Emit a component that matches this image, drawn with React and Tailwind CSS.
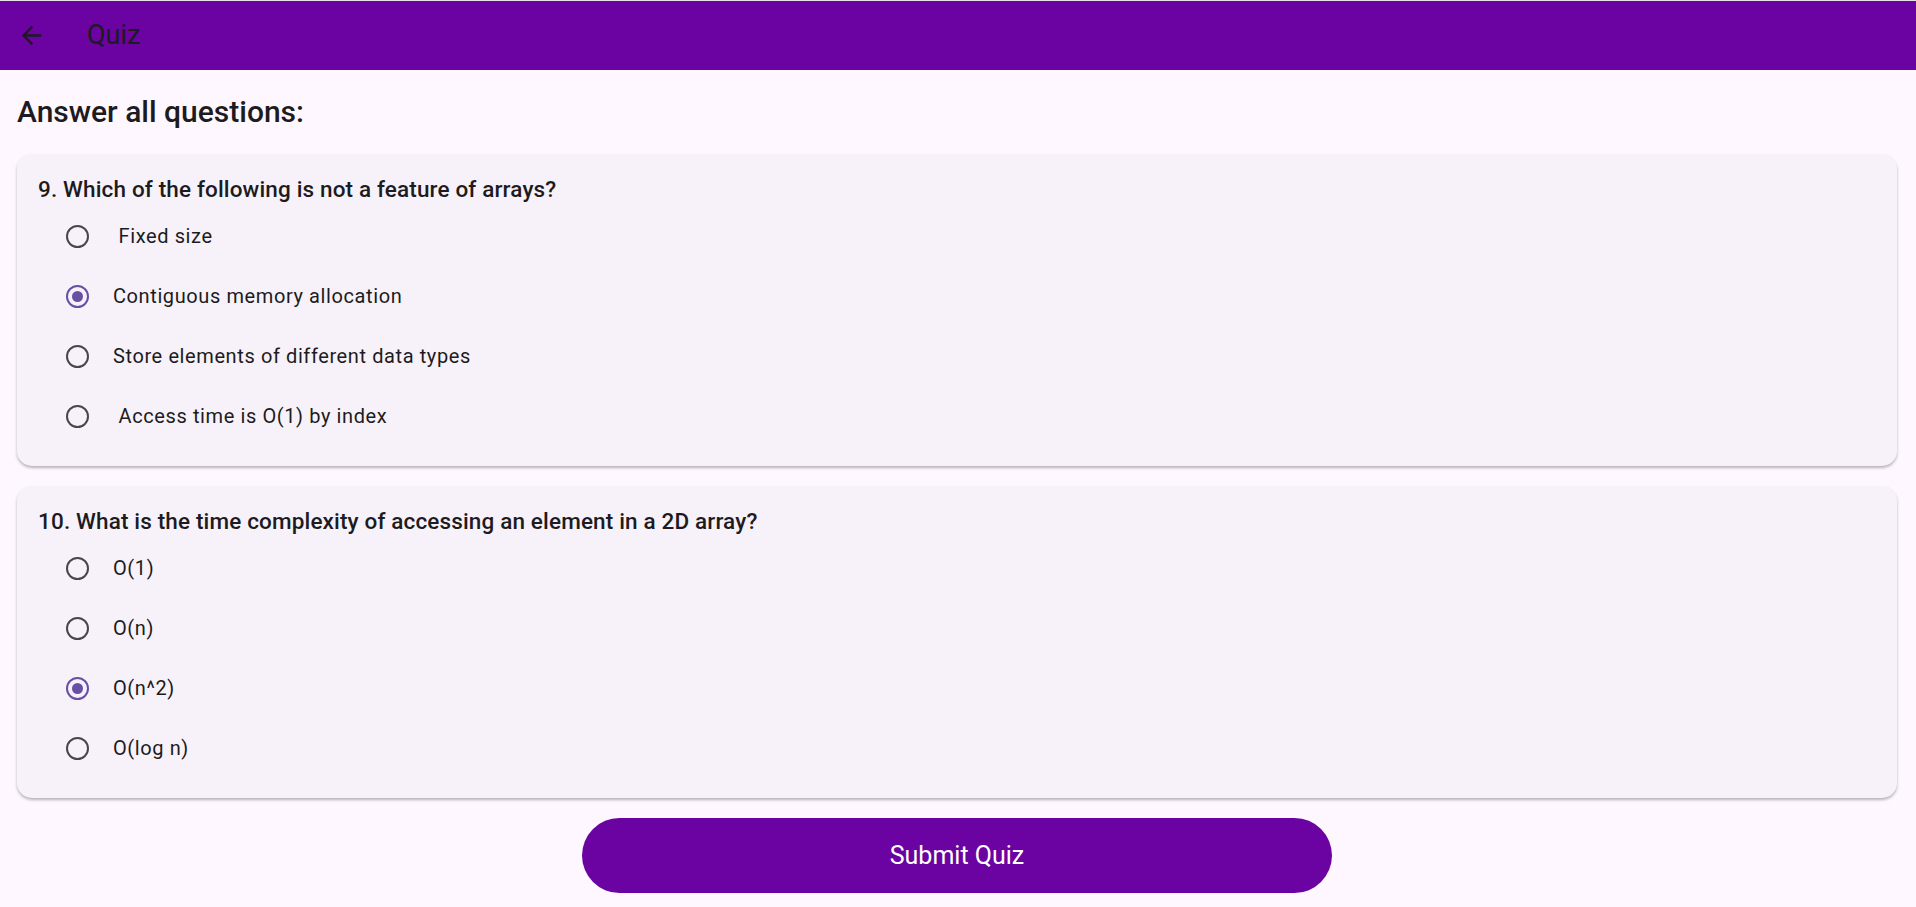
import { useState } from 'react';

const questions = [
    {
        id: 9,
        text: 'Which of the following is not a feature of arrays?',
        options: [' Fixed size', 'Contiguous memory allocation', 'Store elements of different data types', ' Access time is O(1) by index'],
        picked: 1
    },
    {
        id: 10,
        text: 'What is the time complexity of accessing an element in a 2D array?',
        options: ['O(1)', 'O(n)', 'O(n^2)', 'O(log n)'],
        picked: 2
    }
];

const Radio = ({ checked }) => (
    <span
        className={`w-[23px] h-[23px] rounded-full border-[2.6px] flex items-center justify-center flex-none ${
            checked ? 'border-[#6750a4]' : 'border-[#49454f]'
        }`}
    >
        {checked && <span className="w-[11px] h-[11px] rounded-full bg-[#6750a4]" />}
    </span>
);

const QuestionCard = ({ q, picked, onPick }) => {
    return (
        <div className="bg-[#f7f2fa] rounded-[15px] shadow-[0_2px_3px_rgba(0,0,0,0.28)] pt-[21px] pb-[20px]">
            <div className="pl-[21px] text-[22.5px] leading-[28px] font-medium tracking-[0.15px] text-[#1d1b20]">
                {q.id}. {q.text}
            </div>
            <div className="mt-[3px]">
                {q.options.map((opt, i) => (
                    <button
                        key={i}
                        onClick={() => onPick(i)}
                        className="w-full h-[60px] flex items-center pl-[49px] text-left"
                    >
                        <Radio checked={picked === i} />
                        <span className="ml-[24px] whitespace-pre text-[20px] tracking-[0.6px] text-[#1d1b20]">
                            {opt}
                        </span>
                    </button>
                ))}
            </div>
        </div>
    );
};

export default function App() {
    const [answers, setAnswers] = useState(questions.map(q => q.picked));

    return (
        <div className="min-h-screen bg-[#fef7ff] font-['Roboto',sans-serif]">
            <header className="h-[70px] bg-[#6a03a1] border-t border-[#e9e1ec] flex items-center">
                <button className="ml-[17px] w-[29px] h-[29px] text-[#1d1b20]">
                    <svg viewBox="0 0 24 24" width="29" height="29" fill="currentColor">
                        <path d="M20 11H7.83l5.59-5.59L12 4l-8 8 8 8 1.41-1.41L7.83 13H20v-2z" />
                    </svg>
                </button>
                <span className="ml-[41px] text-[27px] text-[#1d1b20]">Quiz</span>
            </header>

            <main className="pl-[17px] pr-[19px]">
                <h1 className="pt-[24px] pb-[24px] text-[30px] leading-[36px] font-medium text-[#1d1b20]">
                    Answer all questions:
                </h1>
                <div className="flex flex-col gap-[20px]">
                    {questions.map((q, qi) => (
                        <QuestionCard
                            key={q.id}
                            q={q}
                            picked={answers[qi]}
                            onPick={(i) => setAnswers(answers.map((a, j) => (j === qi ? i : a)))}
                        />
                    ))}
                </div>
                <div className="flex justify-center mt-[20px]">
                    <button className="w-[750px] h-[75px] rounded-full bg-[#6a03a1] text-white text-[25px]">
                        Submit Quiz
                    </button>
                </div>
            </main>
        </div>
    );
}
